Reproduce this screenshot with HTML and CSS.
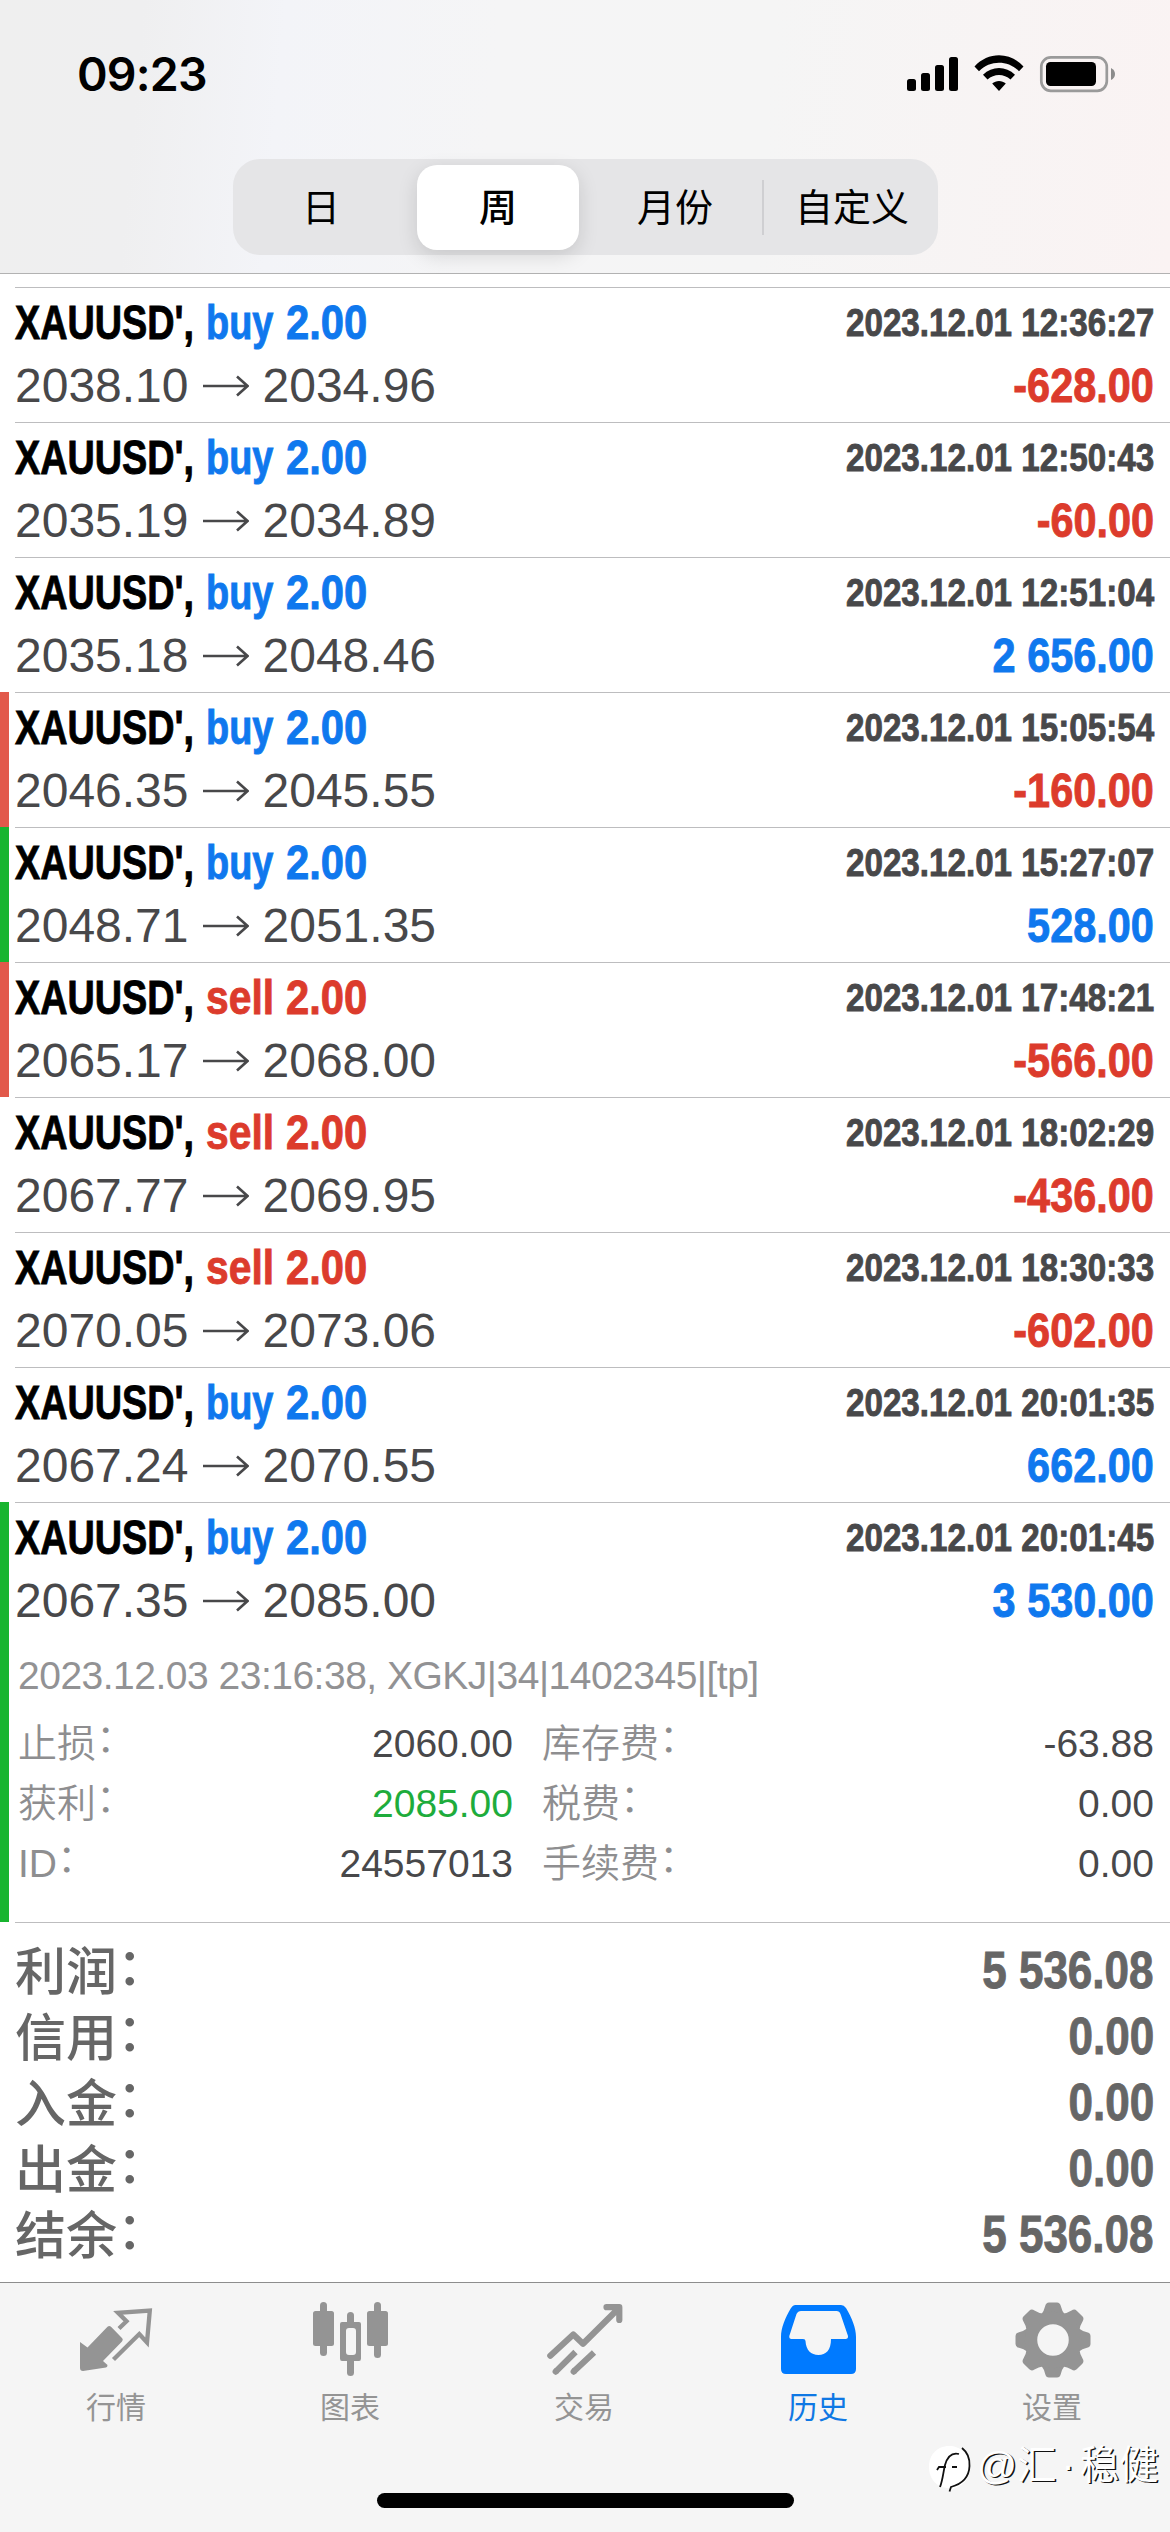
FILE: index.html
```html
<!DOCTYPE html>
<html lang="zh-CN">
<head>
<meta charset="utf-8">
<title>历史</title>
<link rel="stylesheet" href="styles.css">
</head>
<body>
<svg class="defs" width="0" height="0">
  <symbol id="arrow" viewBox="0 0 46 22"><path d="M0 11H44M34 1.5L44.500 11L34 20.500" fill="none" stroke="#48484a" stroke-width="2.600"/></symbol>
</svg>
<div class="screen">
  <header class="top">
    <div class="status">
      <span class="clock">09:23</span>
      <svg class="signals" width="209" height="38" viewBox="907 55 209 38">
        <rect x="907" y="79" width="9" height="12" rx="2.500"/><rect x="921" y="73" width="9" height="18" rx="2.500"/><rect x="935" y="65" width="9" height="26" rx="2.500"/><rect x="949" y="57" width="9" height="34" rx="2.500"/>
        <path d="M974.500 66.500C988 51.500 1010 51.500 1023.500 66.500L1019 71.300C1008 60 990 60 979 71.300ZM983 74.800C992 65.800 1006 65.800 1015 74.800L1010.500 79.600C1004 73.600 994 73.600 987.500 79.600ZM992.200 83.500C996 80 1002 80 1005.800 83.500L999 91Z"/>
        <rect x="1041.300" y="57.300" width="65.500" height="33.500" rx="9.500" fill="none" stroke="#9a9a9a" stroke-width="2.700"/>
        <rect x="1046" y="62" width="50" height="24" rx="4.500"/>
        <path d="M1111 68Q1115 70 1115 74Q1115 78 1111 80Z" fill="#8c8c8c"/>
      </svg>
    </div>
    <nav class="segments">
      <span class="seg">日</span><span class="seg on">周</span><span class="seg wide">月份</span><span class="seg wide last">自定义</span>
    </nav>
  </header>
  <main class="list">
    <article class="deal"><div class="line"><span class="sym cond">XAUUSD',</span><span class="side cond buy">buy</span><span class="lots cond buy">2.00</span><span class="date cond">2023.12.01 12:36:27</span></div><div class="line"><span>2038.10</span><svg class="arrow"><use href="#arrow"/></svg><span>2034.96</span><span class="sum cond neg">-628.00</span></div></article>
    <article class="deal"><div class="line"><span class="sym cond">XAUUSD',</span><span class="side cond buy">buy</span><span class="lots cond buy">2.00</span><span class="date cond">2023.12.01 12:50:43</span></div><div class="line"><span>2035.19</span><svg class="arrow"><use href="#arrow"/></svg><span>2034.89</span><span class="sum cond neg">-60.00</span></div></article>
    <article class="deal"><div class="line"><span class="sym cond">XAUUSD',</span><span class="side cond buy">buy</span><span class="lots cond buy">2.00</span><span class="date cond">2023.12.01 12:51:04</span></div><div class="line"><span>2035.18</span><svg class="arrow"><use href="#arrow"/></svg><span>2048.46</span><span class="sum cond pos">2 656.00</span></div></article>
    <article class="deal sl"><div class="line"><span class="sym cond">XAUUSD',</span><span class="side cond buy">buy</span><span class="lots cond buy">2.00</span><span class="date cond">2023.12.01 15:05:54</span></div><div class="line"><span>2046.35</span><svg class="arrow"><use href="#arrow"/></svg><span>2045.55</span><span class="sum cond neg">-160.00</span></div></article>
    <article class="deal tp"><div class="line"><span class="sym cond">XAUUSD',</span><span class="side cond buy">buy</span><span class="lots cond buy">2.00</span><span class="date cond">2023.12.01 15:27:07</span></div><div class="line"><span>2048.71</span><svg class="arrow"><use href="#arrow"/></svg><span>2051.35</span><span class="sum cond pos">528.00</span></div></article>
    <article class="deal sl"><div class="line"><span class="sym cond">XAUUSD',</span><span class="side cond sell">sell</span><span class="lots cond sell">2.00</span><span class="date cond">2023.12.01 17:48:21</span></div><div class="line"><span>2065.17</span><svg class="arrow"><use href="#arrow"/></svg><span>2068.00</span><span class="sum cond neg">-566.00</span></div></article>
    <article class="deal"><div class="line"><span class="sym cond">XAUUSD',</span><span class="side cond sell">sell</span><span class="lots cond sell">2.00</span><span class="date cond">2023.12.01 18:02:29</span></div><div class="line"><span>2067.77</span><svg class="arrow"><use href="#arrow"/></svg><span>2069.95</span><span class="sum cond neg">-436.00</span></div></article>
    <article class="deal"><div class="line"><span class="sym cond">XAUUSD',</span><span class="side cond sell">sell</span><span class="lots cond sell">2.00</span><span class="date cond">2023.12.01 18:30:33</span></div><div class="line"><span>2070.05</span><svg class="arrow"><use href="#arrow"/></svg><span>2073.06</span><span class="sum cond neg">-602.00</span></div></article>
    <article class="deal"><div class="line"><span class="sym cond">XAUUSD',</span><span class="side cond buy">buy</span><span class="lots cond buy">2.00</span><span class="date cond">2023.12.01 20:01:35</span></div><div class="line"><span>2067.24</span><svg class="arrow"><use href="#arrow"/></svg><span>2070.55</span><span class="sum cond pos">662.00</span></div></article>
    <article class="deal tp open"><div class="line"><span class="sym cond">XAUUSD',</span><span class="side cond buy">buy</span><span class="lots cond buy">2.00</span><span class="date cond">2023.12.01 20:01:45</span></div><div class="line"><span>2067.35</span><svg class="arrow"><use href="#arrow"/></svg><span>2085.00</span><span class="sum cond pos">3 530.00</span></div>
      <div class="details">
        <p class="comment">2023.12.03 23:16:38, XGKJ|34|1402345|[tp]</p>
        <dl class="grid">
          <dt>止损<i>：</i></dt><dd>2060.00</dd><dt>库存费<i>：</i></dt><dd>-63.88</dd>
          <dt>获利<i>：</i></dt><dd class="hit">2085.00</dd><dt>税费<i>：</i></dt><dd>0.00</dd>
          <dt>ID<i>：</i></dt><dd>24557013</dd><dt>手续费<i>：</i></dt><dd>0.00</dd>
        </dl>
      </div>
    </article>
    <section class="totals">
      <div class="total"><span>利润<i>：</i></span><b class="sum cond">5 536.08</b></div>
      <div class="total"><span>信用<i>：</i></span><b class="sum cond">0.00</b></div>
      <div class="total"><span>入金<i>：</i></span><b class="sum cond">0.00</b></div>
      <div class="total"><span>出金<i>：</i></span><b class="sum cond">0.00</b></div>
      <div class="total"><span>结余<i>：</i></span><b class="sum cond">5 536.08</b></div>
    </section>
  </main>
  <footer class="tabs">
    <div class="tab">
      <svg width="76" height="76" viewBox="-1 -6 76 76"><path d="M0 34L7.500 39.500L27.500 18.800Q29.300 17 31 18.800L42.200 30.200Q43.500 31.800 42 33.500L23 53L27.500 57Q27.500 59 26 59.500L3 63Q0 63 0 60Z"/><path d="M39 20.500L46.500 13.300L38 4.800L69.800 2.600L67 34.500L59.300 26L33.500 51.500" fill="none" stroke="#949494" stroke-width="4.300"/></svg>
      <span>行情</span>
    </div>
    <div class="tab">
      <svg width="76" height="76" viewBox="0 0 76 76"><rect y="9" width="21" height="35" rx="2.500"/><rect x="7" width="7" height="54" rx="3.500"/><rect x="34" y="10" width="7" height="20" rx="3.500"/><rect x="34" y="54" width="7" height="20" rx="3.500"/><path fill="#f5f5f5" d="M31 24H44V55H31Z"/><path fill-rule="evenodd" d="M29 20H46Q48 20 48 22V56.500Q48 59 46 59H29Q27 59 27 56.500V22Q27 20 29 20ZM36 26Q33 26 33 29V50Q33 53 36 53H40Q43 53 43 50V29Q43 26 40 26Z"/><rect x="54" y="9" width="21" height="35" rx="2.500"/><rect x="61" width="7" height="56" rx="3.500"/></svg>
      <span>图表</span>
    </div>
    <div class="tab">
      <svg width="76" height="76" viewBox="0 -2 76 76" fill="none" stroke="#949494" stroke-width="6.200" stroke-linecap="round" stroke-linejoin="round"><path d="M3.300 51.700L26.300 30.500L36 39.800L71 5M59.500 3.200H72.300V16"/><path d="M8.700 67.600L9 67.300M26.700 67.600L27 67.300"/><path stroke-linecap="butt" d="M8.700 67.600L28.500 48M26.700 67.600L47 48.600"/></svg>
      <span>交易</span>
    </div>
    <div class="tab on">
      <svg width="76" height="76" viewBox="0 -3 76 76"><path fill-rule="evenodd" d="M14 0H60Q63 0 65 3C71 13 75 23 75 32V64Q75 69 70 69H5Q0 69 0 64V32C0 23 4 13 10 3Q12 0 14 0ZM20 6Q17 6 15.500 9L8.300 31Q8 34 10.500 34H22Q24.500 34 24.500 36C25 45 30 50 37.500 50C45 50 50 45 50 34H64.500Q67.300 34 67 31L59.500 9Q58.500 6 55.500 6Z"/></svg>
      <span>历史</span>
    </div>
    <div class="tab">
      <svg width="76" height="76" viewBox="-38 -38 76 76">
        <defs><path id="tooth" d="M-11.500 -26Q-9 -29 -7.800 -34Q-7 -37.500 -4 -37.500H4Q7 -37.500 7.800 -34Q9 -29 11.500 -26L8 -16H-8Z"/></defs>
        <use href="#tooth"/><use href="#tooth" transform="rotate(45)"/><use href="#tooth" transform="rotate(90)"/><use href="#tooth" transform="rotate(135)"/><use href="#tooth" transform="rotate(180)"/><use href="#tooth" transform="rotate(225)"/><use href="#tooth" transform="rotate(270)"/><use href="#tooth" transform="rotate(315)"/>
        <circle r="22" fill="none" stroke="#949494" stroke-width="12.500"/>
      </svg>
      <span>设置</span>
    </div>
    <div class="watermark">
      <svg width="44" height="48" viewBox="0 0 44 48"><path fill="#fff" d="M20 1C31 1 41 9 41 22C41 35 32 42 24 44L20 47V43C8 43 0 34 0 22C0 10 8 1 20 1Z"/><path d="M33 3C38 7 41 13 40.500 21C40 33 33 39 22 42L20.500 46.500" fill="none" stroke="#111" stroke-width="1.800"/><path d="M30 9C22 7 18 13 16 20C14 28 14 34 11 42M8 25L10 22H17M23 22H28" fill="none" stroke="#111" stroke-width="1.800"/></svg>
      <span>@汇<em>·</em>稳健</span>
    </div>
    <div class="home"></div>
  </footer>
</div>
</body>
</html>
```
FILE: styles.css
```css
* { box-sizing: border-box; }
body { margin: 0; background: #fff; }
.defs { position: absolute; }
i, em { font-style: normal; }
.screen {
  width: 1170px; height: 2532px; overflow: hidden;
  display: flex; flex-direction: column;
  font-family: "Liberation Sans", "Noto Sans CJK SC", sans-serif;
  color: #48484a;
}
.top {
  height: 274px; flex: none;
  background: linear-gradient(95deg, #efefef 0%, #efeff0 12%, #f3f4f8 24%, #f5f5f6 42%, #f5f5f5 65%, #faf3f3 100%);
  border-bottom: 1px solid #b2b2b2;
}
.status { display: flex; justify-content: space-between; align-items: flex-start; height: 159px; padding: 55px 54px 0 77px; }
.clock { font: 600 46.5px/38px Inter, sans-serif; color: #000; letter-spacing: -.8px; }
.segments {
  width: 705px; height: 96px; margin-left: 233px;
  display: grid; grid-template-columns: repeat(4, 176px); align-items: center;
  border-radius: 27px; background: #e5e5e7;
  font: 400 38px/80px "Noto Sans CJK SC", sans-serif; color: #000; text-align: center;
}
.seg { height: 85px; }
.seg.on { margin: 0 6px 0 8px; border-radius: 20px; background: #fff; font-weight: 500; box-shadow: 0 6px 20px rgba(0,0,0,.13); }
.seg.wide { padding-left: 4px; }
.seg.last { padding-left: 6px; background: linear-gradient(#cfcfd2, #cfcfd2) 1px 50% / 2px 55px no-repeat; }

.list { height: 2008px; flex: none; padding-top: 13px; }
.deal { height: 135px; padding: 4px 16px 0 15px; background: linear-gradient(#bdbdbf, #bdbdbf) 15px 0 / 100% 1px no-repeat; }
.deal.sl { border-left: 9px solid #e2594b; padding-left: 6px; background-position: 6px 0; }
.deal.tp { border-left: 9px solid #18b52f; padding-left: 6px; background-position: 6px 0; }
.deal.open { height: 420px; }
.line { display: flex; align-items: center; height: 63px; font-size: 48px; line-height: 63px; white-space: pre; }
.arrow { width: 46px; height: 22px; margin: 0 14px 0 14px; }

/* condensed bold face: the bold is narrowed and its stems thickened back */
.cond { font-weight: 700; transform-origin: 0 50%; -webkit-text-stroke: .9px currentColor; }
.sym { color: #000; width: 191px; transform: scaleX(.787); }
.side { width: 80px; transform: scaleX(.79); }
.side.sell { transform: scaleX(.85); }
.lots { width: 80px; transform: scaleX(.87); }
.buy, .pos { color: #0f78ee; }
.sell, .neg { color: #dc3b2c; }
.date, .sum { margin-left: auto; transform-origin: 100% 50%; }
.date { font-size: 39px; transform: scaleX(.851); }
.sum { transform: scaleX(.863); }

.details { padding: 14px 0 0 3px; font-size: 39px; }
.comment { margin: 0; line-height: 60px; color: #929294; white-space: pre; letter-spacing: -.5px; }
.grid { margin: 8px 0 0; display: grid; grid-template-columns: 251px 244px 1fr 1fr; line-height: 60px; }
.grid dt { color: #8e8e90; font-weight: 350; height: 60px; white-space: nowrap; }
.grid dt:nth-of-type(even) { padding-left: 29px; }
.grid dd { margin: 0; text-align: right; height: 60px; }
.grid .hit { color: #1eac3c; }
.grid i, .total i { position: relative; top: -5px; }

.totals { padding: 16px 16px 0 15px; background: linear-gradient(#bdbdbf, #bdbdbf) 15px 0 / 100% 1px no-repeat; color: #666; }
.total { display: flex; justify-content: space-between; height: 66px; font-size: 51px; line-height: 66px; }
.total span { font-weight: 500; font-family: "Noto Sans CJK SC", sans-serif; line-height: 60px; }

.tabs {
  height: 250px; flex: none; position: relative; border-top: 1px solid #8d8d8d; background: #f5f5f5;
  display: grid; grid-template-columns: repeat(5, 234px);
}
.tab { display: flex; flex-direction: column; align-items: center; padding-top: 19px; gap: 7px; font: 400 30px/40px "Noto Sans CJK SC", sans-serif; color: #949494; fill: #949494; }
.tab.on { color: #0f78e4; fill: #007aff; }
.tab span { padding-right: 2px; }
.home { position: absolute; left: 377px; top: 210px; width: 417px; height: 15px; border-radius: 8px; background: #000; }
.watermark { position: absolute; left: 929px; top: 162px; display: flex; align-items: flex-start; gap: 4px; font: 400 39.5px/40px "Liberation Sans", "Noto Sans CJK SC", sans-serif; color: #fff; text-shadow: 1.5px 1px 0 #111; white-space: nowrap; }
.watermark em { margin: 0 5px; }
```
